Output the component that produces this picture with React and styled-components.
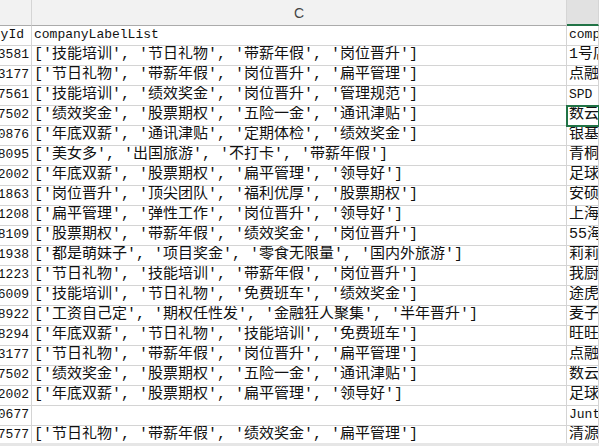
import React from 'react';
import styled, { createGlobalStyle } from 'styled-components';

const Global = createGlobalStyle`
  *, *::before, *::after { box-sizing: border-box; }
  html, body { margin: 0; padding: 0; background: #fff; }
  body { width: 599px; height: 446px; overflow: hidden; }
`;

const COLS = '32px 535px 1fr';

const Sheet = styled.div`
  width: 599px;
  height: 446px;
  display: flex;
  flex-direction: column;
  overflow: hidden;
  background: #fff;
`;

const HeaderRow = styled.div`
  display: grid;
  grid-template-columns: ${COLS};
  height: 26px;
  flex: none;
`;

const HeaderCell = styled.div`
  display: flex;
  align-items: center;
  justify-content: center;
  background: ${(p) => (p.$active ? '#e1e1e1' : '#f2f2f2')};
  border-bottom: ${(p) => (p.$active ? '2px solid #217346' : '1px solid #ababab')};
  border-right: 1px solid #d5d5d5;
  font-family: "Liberation Sans", Arial, sans-serif;
  font-size: 14px;
  color: #444;
  overflow: hidden;
`;

const Body = styled.div`
  flex: 1;
  overflow: hidden;
`;

const Row = styled.div`
  display: grid;
  grid-template-columns: ${COLS};
  height: 20px;
`;

const Cell = styled.div`
  display: flex;
  align-items: flex-end;
  justify-content: ${(p) => (p.$right ? 'flex-end' : 'flex-start')};
  padding: ${(p) => (p.$right ? `0 ${p.$padRight || 2}px 1px 0` : '0 0 1px 2px')};
  border-right: 1px solid #d4d4d4;
  border-bottom: 1px solid #d4d4d4;
  overflow: hidden;
  white-space: nowrap;
  color: #111;
  outline: ${(p) => (p.$selected ? '2px solid #217346' : 'none')};
  outline-offset: -1px;
  position: relative;
  z-index: ${(p) => (p.$selected ? 1 : 0)};
`;

const Text = styled.span`
  flex: none;
  font-family: "Liberation Mono", "Noto Sans CJK SC", monospace;
  font-size: ${(p) => (p.$latin ? '13px' : '15px')};
  line-height: 18px;
`;

const ScrollStrip = styled.div`
  height: 3px;
  flex: none;
  background: #e6e6e6;
`;

const rows = [
  ['3581', "['技能培训', '节日礼物', '带薪年假', '岗位晋升']", '1号店'],
  ['3177', "['节日礼物', '带薪年假', '岗位晋升', '扁平管理']", '点融'],
  ['7561', "['技能培训', '绩效奖金', '岗位晋升', '管理规范']", 'SPD'],
  ['7502', "['绩效奖金', '股票期权', '五险一金', '通讯津贴']", '数云'],
  ['0876', "['年底双薪', '通讯津贴', '定期体检', '绩效奖金']", '银基'],
  ['8095', "['美女多', '出国旅游', '不打卡', '带薪年假']", '青桐'],
  ['2002', "['年底双薪', '股票期权', '扁平管理', '领导好']", '足球'],
  ['1863', "['岗位晋升', '顶尖团队', '福利优厚', '股票期权']", '安硕'],
  ['1208', "['扁平管理', '弹性工作', '岗位晋升', '领导好']", '上海'],
  ['8109', "['股票期权', '带薪年假', '绩效奖金', '岗位晋升']", '55海'],
  ['1938', "['都是萌妹子', '项目奖金', '零食无限量', '国内外旅游']", '莉莉'],
  ['1223', "['节日礼物', '技能培训', '带薪年假', '岗位晋升']", '我厨'],
  ['6009', "['技能培训', '节日礼物', '免费班车', '绩效奖金']", '途虎'],
  ['8922', "['工资自己定', '期权任性发', '金融狂人聚集', '半年晋升']", '麦子'],
  ['8294', "['年底双薪', '节日礼物', '技能培训', '免费班车']", '旺旺'],
  ['3177', "['节日礼物', '带薪年假', '岗位晋升', '扁平管理']", '点融'],
  ['7502', "['绩效奖金', '股票期权', '五险一金', '通讯津贴']", '数云'],
  ['2002', "['年底双薪', '股票期权', '扁平管理', '领导好']", '足球'],
  ['0677', '', 'Junt'],
  ['7577', "['节日礼物', '带薪年假', '绩效奖金', '扁平管理']", '清源'],
];

const isLatin = (s) => /^[\x00-\x7f]*$/.test(s);

export default function App() {
  return (
    <Sheet>
      <Global />
      <HeaderRow>
        <HeaderCell />
        <HeaderCell>C</HeaderCell>
        <HeaderCell $active />
      </HeaderRow>
      <Body>
        <Row>
          <Cell $right $padRight={7}>
            <Text $latin>companyId</Text>
          </Cell>
          <Cell>
            <Text $latin>companyLabelList</Text>
          </Cell>
          <Cell>
            <Text $latin>companyShortName</Text>
          </Cell>
        </Row>
        {rows.map(([id, labels, name], i) => (
          <Row key={i}>
            <Cell $right>
              <Text $latin>{id}</Text>
            </Cell>
            <Cell>
              <Text>{labels}</Text>
            </Cell>
            <Cell $selected={i === 3}>
              <Text $latin={isLatin(name)}>{name}</Text>
            </Cell>
          </Row>
        ))}
      </Body>
      <ScrollStrip />
    </Sheet>
  );
}
